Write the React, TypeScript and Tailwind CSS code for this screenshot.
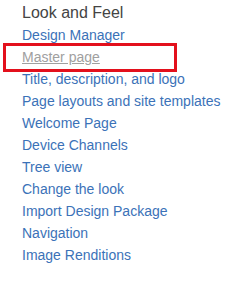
const links = [
  'Design Manager',
  'Master page',
  'Title, description, and logo',
  'Page layouts and site templates',
  'Welcome Page',
  'Device Channels',
  'Tree view',
  'Change the look',
  'Import Design Package',
  'Navigation',
  'Image Renditions',
]

export default function App() {
  return (
    <div className="w-[243px] h-[285px] bg-white pl-[22px] pt-[2px] font-['Liberation_Sans',Arial,sans-serif]">
      <h2 className="text-[16px] leading-[22px] text-[#444444]">Look and Feel</h2>
      <ul className="flex flex-col">
        {links.map(label => {
          const hidden = label === 'Master page'
          return (
            <li key={label} className="relative text-[14px] leading-[22px]">
              {hidden ? (
                <>
                  <a className="text-[#a0a0a0] underline decoration-[#a0a0a0]">{label}</a>
                  {/* annotation box */}
                  <div className="absolute left-[-19px] top-[-3px] w-[174px] h-[29px] border-[3px] border-[#e3101c]" />
                </>
              ) : (
                <a className="text-[#3b72b8]">{label}</a>
              )}
            </li>
          )
        })}
      </ul>
    </div>
  )
}
